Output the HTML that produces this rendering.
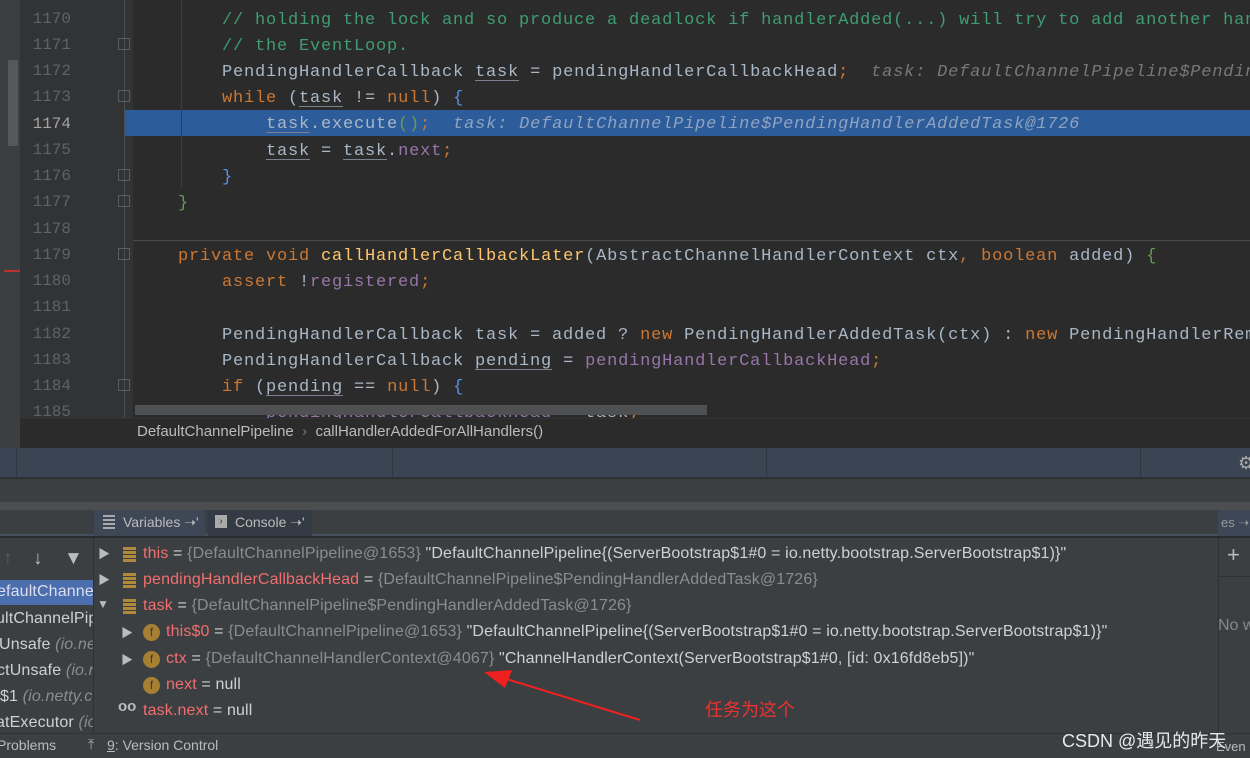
<!DOCTYPE html>
<html><head><meta charset="utf-8"><style>
*{margin:0;padding:0;box-sizing:border-box}
body{width:1250px;height:758px;overflow:hidden;background:#2b2b2b;position:relative;font-family:"Liberation Sans","Noto Sans CJK SC",sans-serif}
.a{position:absolute;white-space:nowrap}
.code{font-family:"Liberation Mono",monospace;font-size:17px;letter-spacing:0.8px;color:#a9b7c6;white-space:pre;line-height:26px;height:26px}
.ln{font-family:"Liberation Mono",monospace;font-size:16px;color:#606366;width:44px;text-align:right;left:27px;line-height:26px}
.c{color:#3f9c74}.k{color:#cc7832}.f{color:#9876aa}.m{color:#ffc66d}.h{color:#787878;font-style:italic}
.u{text-decoration:underline;text-decoration-color:#7a8290;text-underline-offset:4px}
.v{font-size:16px;white-space:pre;color:#d0d0d0;line-height:26px;letter-spacing:0.14px}
.n{color:#f06e6e}.g{color:#8c8c8c}
.fold{width:12px;height:12px;border:1px solid #5a5d60;left:118px}
</style></head><body>
<div class="a" style="left:0;top:0;width:20px;height:446px;background:#3c3f41"></div>
<div class="a" style="left:8px;top:60px;width:10px;height:86px;background:#555859"></div>
<div class="a" style="left:4px;top:270px;width:16px;height:2px;background:#c03030"></div>
<div class="a" style="left:20px;top:0;width:113px;height:420px;background:#313335"></div>
<div class="a" style="left:124px;top:0;width:1px;height:420px;background:#4a4d50"></div>
<div class="a" style="left:125px;top:110px;width:1125px;height:26px;background:#2d5c9a"></div>
<div class="a" style="left:133px;top:240px;width:1117px;height:1px;background:#4b4b4b"></div>
<div class="a" style="left:181px;top:0;width:1px;height:188px;background:#3a3f3a"></div>
<div class="a ln" style="top:6px">1170</div>
<div class="a ln" style="top:32px">1171</div>
<div class="a ln" style="top:58px">1172</div>
<div class="a ln" style="top:84px">1173</div>
<div class="a ln" style="top:111px;color:#a4a3a3">1174</div>
<div class="a ln" style="top:137px">1175</div>
<div class="a ln" style="top:163px">1176</div>
<div class="a ln" style="top:189px">1177</div>
<div class="a ln" style="top:216px">1178</div>
<div class="a ln" style="top:242px">1179</div>
<div class="a ln" style="top:268px">1180</div>
<div class="a ln" style="top:294px">1181</div>
<div class="a ln" style="top:321px">1182</div>
<div class="a ln" style="top:347px">1183</div>
<div class="a ln" style="top:373px">1184</div>
<div class="a ln" style="top:399px">1185</div>
<div class="a fold" style="top:38px"></div><div class="a fold" style="top:90px"></div>
<div class="a fold" style="top:169px"></div><div class="a fold" style="top:195px"></div>
<div class="a fold" style="top:248px"></div><div class="a fold" style="top:379px"></div>
<div class="a code" style="left:222px;top:8px"><span class="c">// holding the lock and so produce a deadlock if handlerAdded(...) will try to add another han</span></div>
<div class="a code" style="left:222px;top:34px"><span class="c">// the EventLoop.</span></div>
<div class="a code" style="left:222px;top:60px">PendingHandlerCallback <span class="u">task</span> = pendingHandlerCallbackHead<span class="k">;</span>  <span class="h">task: DefaultChannelPipeline$Pendin</span></div>
<div class="a code" style="left:222px;top:86px"><span class="k">while</span> (<span class="u">task</span> != <span class="k">null</span>) <span style="color:#5394ec">{</span></div>
<div class="a code" style="left:266px;top:112px"><span class="u">task</span>.execute<span style="color:#6a9a5a">()</span><span class="k">;</span>  <span class="h" style="color:#8fa3c0">task: DefaultChannelPipeline$PendingHandlerAddedTask@1726</span></div>
<div class="a code" style="left:266px;top:139px"><span class="u">task</span> = <span class="u">task</span>.<span class="f">next</span><span class="k">;</span></div>
<div class="a code" style="left:222px;top:165px;color:#5394ec">}</div>
<div class="a code" style="left:178px;top:191px;color:#6a9a5a">}</div>
<div class="a code" style="left:178px;top:244px"><span class="k">private void </span><span class="m">callHandlerCallbackLater</span>(AbstractChannelHandlerContext ctx<span class="k">, boolean </span>added) <span style="color:#6a9a5a">{</span></div>
<div class="a code" style="left:222px;top:270px"><span class="k">assert </span>!<span class="f">registered</span><span class="k">;</span></div>
<div class="a code" style="left:222px;top:323px">PendingHandlerCallback task = added ? <span class="k">new </span>PendingHandlerAddedTask(ctx) : <span class="k">new </span>PendingHandlerRem</div>
<div class="a code" style="left:222px;top:349px">PendingHandlerCallback <span class="u">pending</span> = <span class="f">pendingHandlerCallbackHead</span><span class="k">;</span></div>
<div class="a code" style="left:222px;top:375px"><span class="k">if </span>(<span class="u">pending</span> == <span class="k">null</span>) <span style="color:#5394ec">{</span></div>
<div class="a code" style="left:266px;top:401px"><span class="f">pendingHandlerCallbackHead</span> = task<span class="k">;</span></div>
<div class="a" style="left:135px;top:405px;width:572px;height:10px;background:#4e5052"></div>
<div class="a" style="left:0;top:418px;width:1250px;height:30px;background:#2b2b2b;border-top:1px solid #323232"></div>
<div class="a" style="left:0;top:418px;width:20px;height:30px;background:#3c3f41"></div>
<div class="a" style="left:137px;top:423px;font-size:15px;color:#bbbbbb;white-space:pre">DefaultChannelPipeline  <span style="color:#777">›</span>  callHandlerAddedForAllHandlers()</div>
<div class="a" style="left:0;top:448px;width:1250px;height:30px;background:#3a4452;border-bottom:1px solid #2e3440"></div>
<div class="a" style="left:16px;top:448px;width:1px;height:30px;background:#2e3440"></div>
<div class="a" style="left:392px;top:448px;width:1px;height:30px;background:#2e3440"></div>
<div class="a" style="left:766px;top:448px;width:1px;height:30px;background:#2e3440"></div>
<div class="a" style="left:1140px;top:448px;width:1px;height:30px;background:#2e3440"></div>
<div class="a" style="left:1238px;top:453px;font-size:18px;color:#aaa">⚙</div>
<div class="a" style="left:0;top:479px;width:1250px;height:23px;background:#3c3f41"></div>
<div class="a" style="left:0;top:502px;width:1250px;height:8px;background:#4b4d4f"></div>
<div class="a" style="left:0;top:510px;width:1250px;height:26px;background:#3c3f41;border-bottom:2px solid #45505e"></div>
<div class="a" style="left:94px;top:510px;width:111px;height:26px;background:#3d4756"></div>
<div class="a" style="left:208px;top:510px;width:104px;height:26px;background:#353b44"></div>
<div class="a" style="left:103px;top:515px;width:12px;height:2px;background:#aaa;box-shadow:0 4px #aaa,0 8px #aaa,0 12px #aaa"></div>
<div class="a" style="left:123px;top:514px;font-size:14px;color:#bbb">Variables ➝'</div>
<div class="a" style="left:215px;top:515px;width:12px;height:13px;background:#aaa;color:#333;font-size:10px;line-height:13px;text-align:center">›</div>
<div class="a" style="left:235px;top:514px;font-size:14px;color:#bbb">Console ➝'</div>
<div class="a" style="left:1218px;top:510px;width:32px;height:26px;background:#3d4756;color:#999;font-size:13px;padding:5px 0 0 3px">es ➝</div>
<div class="a" style="left:0;top:538px;width:1250px;height:195px;background:#3c3f41"></div>
<div class="a" style="left:93px;top:538px;width:1px;height:195px;background:#2f3133"></div>
<div class="a" style="left:1218px;top:538px;width:1px;height:195px;background:#2f3133"></div>
<div class="a" style="left:1219px;top:576px;width:31px;height:1px;background:#2f3133"></div>
<div class="a" style="left:1227px;top:542px;font-size:22px;color:#bbb">+</div>
<div class="a" style="left:1218px;top:617px;font-size:16px;color:#888">No w</div>
<div class="a" style="left:3px;top:548px;font-size:19px;color:#5a5d60">↑</div>
<div class="a" style="left:33px;top:548px;font-size:19px;color:#bbb">↓</div>
<div class="a" style="left:64px;top:548px;font-size:19px;color:#bbb">▼</div>
<div class="a" style="left:0;top:580px;width:93px;height:25px;background:#4b6eaf"></div>
<div style="position:absolute;left:0;top:578px;width:93px;height:155px;overflow:hidden">
<div class="a v" style="left:-3px;top:1px;color:#dde">efaultChanne</div>
<div class="a v" style="left:-4px;top:28px">ultChannelPip</div>
<div class="a v" style="left:-1px;top:54px">Unsafe <i class="g">(io.net</i></div>
<div class="a v" style="left:-3px;top:80px">ctUnsafe <i class="g">(io.n</i></div>
<div class="a v" style="left:0;top:106px">$1 <i class="g">(io.netty.c</i></div>
<div class="a v" style="left:-4px;top:132px">atExecutor <i class="g">(io</i></div>
</div>
<div class="a" style="left:98px;top:545px;color:#bbb;font-size:12px">▶</div>
<div class="a" style="left:98px;top:571px;color:#bbb;font-size:12px">▶</div>
<div class="a" style="left:97px;top:597px;color:#bbb;font-size:12px">▼</div>
<div class="a" style="left:121px;top:624px;color:#bbb;font-size:12px">▶</div>
<div class="a" style="left:121px;top:651px;color:#bbb;font-size:12px">▶</div>
<div class="a" style="left:123px;top:547px;width:13px;height:3px;background:#b08a3a;box-shadow:0 4px #b08a3a,0 8px #b08a3a,0 12px #b08a3a"></div>
<div class="a" style="left:123px;top:573px;width:13px;height:3px;background:#b08a3a;box-shadow:0 4px #b08a3a,0 8px #b08a3a,0 12px #b08a3a"></div>
<div class="a" style="left:123px;top:599px;width:13px;height:3px;background:#b08a3a;box-shadow:0 4px #b08a3a,0 8px #b08a3a,0 12px #b08a3a"></div>
<div class="a" style="left:143px;top:624px;width:17px;height:17px;border-radius:50%;background:#a67f32;color:#3c3f41;font-size:12px;text-align:center;line-height:17px">f</div>
<div class="a" style="left:143px;top:651px;width:17px;height:17px;border-radius:50%;background:#a67f32;color:#3c3f41;font-size:12px;text-align:center;line-height:17px">f</div>
<div class="a" style="left:143px;top:677px;width:17px;height:17px;border-radius:50%;background:#a67f32;color:#3c3f41;font-size:12px;text-align:center;line-height:17px">f</div>
<div class="a" style="left:118px;top:698px;color:#bbb;font-size:15px;font-weight:bold">oo</div>
<div class="a v" style="left:143px;top:541px"><span class="n">this</span> = <span class="g">{DefaultChannelPipeline@1653}</span> "DefaultChannelPipeline{(ServerBootstrap$1#0 = io.netty.bootstrap.ServerBootstrap$1)}"</div>
<div class="a v" style="left:143px;top:567px"><span class="n">pendingHandlerCallbackHead</span> = <span class="g">{DefaultChannelPipeline$PendingHandlerAddedTask@1726}</span></div>
<div class="a v" style="left:143px;top:593px"><span class="n">task</span> = <span class="g">{DefaultChannelPipeline$PendingHandlerAddedTask@1726}</span></div>
<div class="a v" style="left:166px;top:619px"><span class="n">this$0</span> = <span class="g">{DefaultChannelPipeline@1653}</span> "DefaultChannelPipeline{(ServerBootstrap$1#0 = io.netty.bootstrap.ServerBootstrap$1)}"</div>
<div class="a v" style="left:166px;top:646px"><span class="n">ctx</span> = <span class="g">{DefaultChannelHandlerContext@4067}</span> "ChannelHandlerContext(ServerBootstrap$1#0, [id: 0x16fd8eb5])"</div>
<div class="a v" style="left:166px;top:672px"><span class="n">next</span> = null</div>
<div class="a v" style="left:143px;top:698px"><span class="n">task.next</span> = null</div>
<svg class="a" style="left:0;top:0" width="1250" height="758"><line x1="640" y1="720" x2="500" y2="677" stroke="#f02020" stroke-width="2"/><polygon points="484,672 512,670 505,688" fill="#f02020"/></svg>
<div class="a" style="left:705px;top:696px;font-size:18px;color:#f03030;font-family:'Noto Sans CJK SC',sans-serif">任务为这个</div>
<div class="a" style="left:0;top:733px;width:1250px;height:25px;background:#3c3f41;border-top:1px solid #323232"></div>
<div class="a" style="left:-3px;top:737px;font-size:14px;color:#bbb">Problems</div>
<div class="a" style="left:88px;top:736px;font-size:14px;color:#aaa">⤒</div>
<div class="a" style="left:107px;top:737px;font-size:14px;color:#bbb"><u>9</u>: Version Control</div>
<div class="a" style="left:1216px;top:739px;font-size:13px;color:#bbb">Even</div>
<div class="a" style="left:1062px;top:727px;font-size:18px;color:#e8e8e8;font-family:'Liberation Sans','Noto Sans CJK SC',sans-serif">CSDN @遇见的昨天</div>
</body></html>
